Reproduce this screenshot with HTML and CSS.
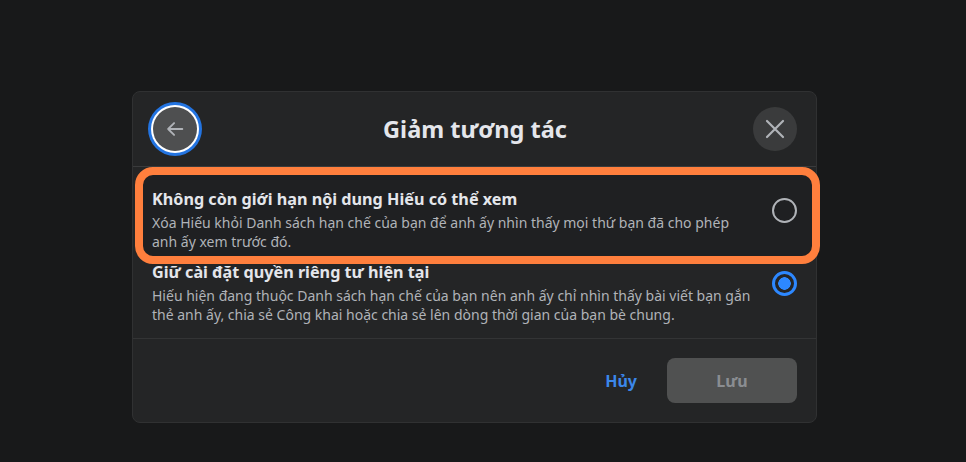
FILE: index.html
```html
<!DOCTYPE html>
<html lang="vi">
<head>
<meta charset="utf-8">
<title>Giảm tương tác</title>
<link rel="stylesheet" href="styles.css">
</head>
<body>
<div class="dialog">
  <div class="header">
    <button class="circle-btn back-btn" aria-label="Quay lại">
      <svg width="22" height="22" viewBox="0 0 24 24" fill="none" stroke="#b0b3b8" stroke-width="2" stroke-linecap="round" stroke-linejoin="round"><path d="M20 12H4.5M11 5.5L4.5 12L11 18.5"/></svg>
    </button>
    <h1 class="title">Giảm tương tác</h1>
    <button class="circle-btn close-btn" aria-label="Đóng">
      <svg width="24" height="24" viewBox="0 0 24 24" fill="none" stroke="#b0b3b8" stroke-width="2.2" stroke-linecap="round"><path d="M4 4L20 20M20 4L4 20"/></svg>
    </button>
  </div>
  <div class="options">
    <div class="option highlighted">
      <div class="option-text">
        <div class="option-title">Không còn giới hạn nội dung Hiếu có thể xem</div>
        <div class="option-desc">Xóa Hiếu khỏi Danh sách hạn chế của bạn để anh ấy nhìn thấy mọi thứ bạn đã cho phép<br>anh ấy xem trước đó.</div>
      </div>
      <span class="radio"></span>
    </div>
    <div class="option">
      <div class="option-text">
        <div class="option-title">Giữ cài đặt quyền riêng tư hiện tại</div>
        <div class="option-desc">Hiếu hiện đang thuộc Danh sách hạn chế của bạn nên anh ấy chỉ nhìn thấy bài viết bạn gắn thẻ anh ấy, chia sẻ Công khai hoặc chia sẻ lên dòng thời gian của bạn bè chung.</div>
      </div>
      <span class="radio checked"></span>
    </div>
  </div>
  <div class="footer">
    <button class="btn-cancel">Hủy</button>
    <button class="btn-save">Lưu</button>
  </div>
</div>
</body>
</html>
```
FILE: styles.css
```css
* { box-sizing: border-box; }
html, body { margin: 0; padding: 0; }
body {
  background: #18191a;
  font-family: "Noto Sans", "Open Sans", sans-serif;
  color: #e4e6eb;
  padding: 91px 0 0 132px;
  width: 966px;
  height: 462px;
  overflow: hidden;
}
.dialog {
  width: 685px;
  height: 332px;
  background: #242526;
  border: 1px solid #303132;
  border-radius: 8px;
  display: flex;
  flex-direction: column;
}
.header {
  height: 75px;
  flex: none;
  display: flex;
  align-items: center;
  justify-content: space-between;
  padding: 0 19px 0 20px;
  border-bottom: 1px solid #3a3b3c;
}
.circle-btn {
  width: 44px;
  height: 44px;
  border-radius: 50%;
  border: none;
  padding: 0;
  display: flex;
  align-items: center;
  justify-content: center;
  background: #3a3b3c;
}
.back-btn {
  background: #4e4f50;
  box-shadow: 0 0 0 2px #ffffff, 0 0 0 5px #2374e1;
}
.title {
  margin: 0;
  font-size: 23.5px;
  font-weight: 700;
  color: #e4e6eb;
}
.options {
  padding: 16px 0 9px;
  border-bottom: 1px solid #333435;
}
.option {
  display: flex;
  align-items: flex-start;
  gap: 12px;
  padding: 5px 19px 5px 19px;
  position: relative;
}
.highlighted {
  isolation: isolate;
  z-index: 1;
}
.highlighted::before {
  content: "";
  position: absolute;
  top: -16px;
  bottom: -8px;
  left: 2px;
  right: -4px;
  border: 8px solid #ff7f3d;
  border-radius: 18px;
  background: #1f2022;
  z-index: -1;
}
.option-text { flex: 1; }
.option-title {
  font-size: 16.2px;
  font-weight: 700;
  line-height: 22px;
  color: #e4e6eb;
}
.option-desc {
  margin-top: 3px;
  font-size: 14px;
  line-height: 19px;
  color: #b0b3b8;
}
.radio {
  flex: none;
  width: 25px;
  height: 25px;
  margin-top: 10px;
  border-radius: 50%;
  border: 2px solid #b0b3b8;
}
.radio.checked {
  border: 3px solid #2d88ff;
  background: radial-gradient(circle, #2d88ff 0 6px, transparent 6.5px);
}
.footer {
  flex: 1;
  display: flex;
  align-items: center;
  justify-content: flex-end;
  gap: 14px;
  padding: 0 19px 0 20px;
}
.btn-cancel, .btn-save {
  font-family: inherit;
  font-size: 16px;
  font-weight: 700;
  border: none;
  border-radius: 8px;
  height: 45px;
}
.btn-cancel {
  background: transparent;
  color: #3b87ea;
  padding: 0 16px;
}
.btn-save {
  width: 130px;
  background: #505151;
  color: #8a8d91;
}
```
